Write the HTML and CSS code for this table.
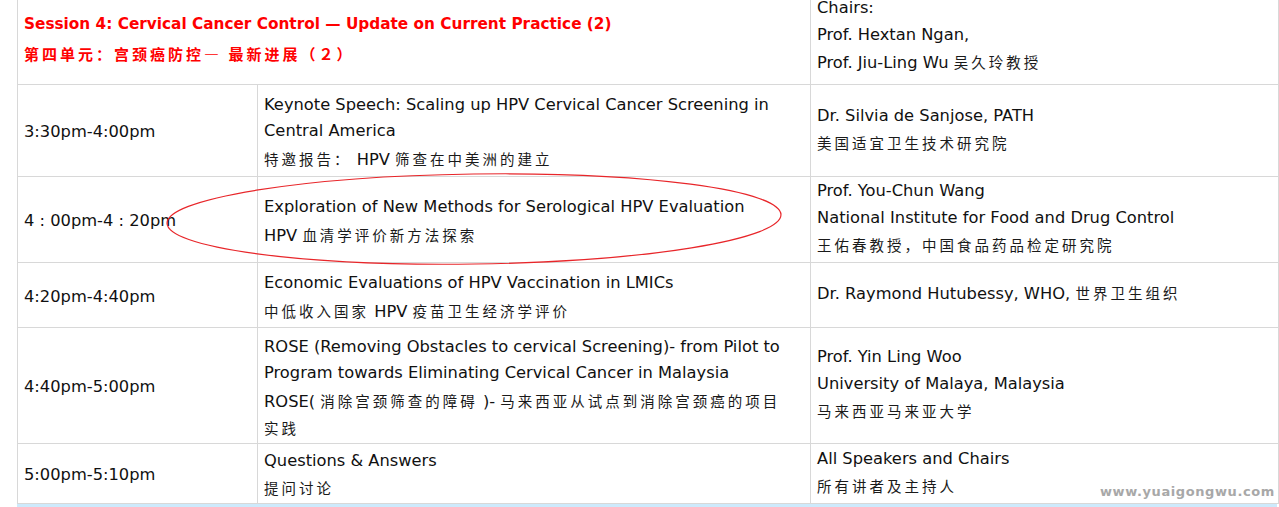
FILE: index.html
```html
<!DOCTYPE html>
<html lang="zh-CN">
<head>
<meta charset="utf-8">
<title>Session 4</title>
<link rel="stylesheet" href="styles.css">
</head>
<body>
<div class="page">
  <table class="agenda">
    <colgroup>
      <col class="c-time">
      <col class="c-topic">
      <col class="c-speaker">
    </colgroup>
    <tr class="r-head">
      <td colspan="2" class="session">
        <p class="session-en">Session 4: Cervical Cancer Control — Update on Current Practice (2)</p>
        <p class="session-zh">第四单元：宫颈癌防控— 最新进展（２）</p>
      </td>
      <td class="spk">
        <p>Chairs:</p>
        <p>Prof. Hextan Ngan,</p>
        <p>Prof. Jiu-Ling Wu <span class="zh">吴久玲教授</span></p>
      </td>
    </tr>
    <tr class="r2">
      <td class="time">3:30pm-4:00pm</td>
      <td class="topic">
        <p class="en">Keynote Speech: Scaling up HPV Cervical Cancer Screening in Central America</p>
        <p class="zhp"><span class="zh">特邀报告：</span> HPV <span class="zh">筛查在中美洲的建立</span></p>
      </td>
      <td class="spk">
        <p>Dr. Silvia de Sanjose, PATH</p>
        <p class="zh">美国适宜卫生技术研究院</p>
      </td>
    </tr>
    <tr class="r3">
      <td class="time">4 : 00pm-4 : 20pm</td>
      <td class="topic">
        <p class="en">Exploration of New Methods for Serological HPV Evaluation</p>
        <p class="zhp">HPV <span class="zh">血清学评价新方法探索</span></p>
      </td>
      <td class="spk">
        <p>Prof. You-Chun Wang</p>
        <p>National Institute for Food and Drug Control</p>
        <p class="zh">王佑春教授，中国食品药品检定研究院</p>
      </td>
    </tr>
    <tr class="r4">
      <td class="time">4:20pm-4:40pm</td>
      <td class="topic">
        <p class="en">Economic Evaluations of HPV Vaccination in LMICs</p>
        <p class="zhp"><span class="zh">中低收入国家</span> HPV <span class="zh">疫苗卫生经济学评价</span></p>
      </td>
      <td class="spk">
        <p>Dr. Raymond Hutubessy, WHO, <span class="zh">世界卫生组织</span></p>
      </td>
    </tr>
    <tr class="r5">
      <td class="time">4:40pm-5:00pm</td>
      <td class="topic">
        <p class="en">ROSE (Removing Obstacles to cervical Screening)- from Pilot to Program towards Eliminating Cervical Cancer in Malaysia</p>
        <p class="zhp">ROSE( <span class="zh">消除宫颈筛查的障碍</span> )- <span class="zh">马来西亚从试点到消除宫颈癌的项目实践</span></p>
      </td>
      <td class="spk">
        <p>Prof. Yin Ling Woo</p>
        <p>University of Malaya, Malaysia</p>
        <p class="zh">马来西亚马来亚大学</p>
      </td>
    </tr>
    <tr class="r6">
      <td class="time">5:00pm-5:10pm</td>
      <td class="topic">
        <p class="en">Questions &amp; Answers</p>
        <p class="zhp zh">提问讨论</p>
      </td>
      <td class="spk">
        <p>All Speakers and Chairs</p>
        <p class="zh">所有讲者及主持人</p>
      </td>
    </tr>
  </table>
  <div class="next-row"></div>
  <svg class="mark" width="640" height="110" viewBox="160 165 640 110" aria-hidden="true">
    <ellipse cx="474" cy="219" rx="307" ry="45" fill="none" stroke="#e8262a" stroke-width="1.2" transform="rotate(-0.8 474 219)"/>
  </svg>
  <div class="watermark">www.yuaigongwu.com</div>
</div>
</body>
</html>
```
FILE: styles.css
```css
html, body {
  margin: 0;
  padding: 0;
  background: #ffffff;
}
body {
  font-family: "DejaVu Sans", "Noto Sans CJK SC", sans-serif;
  font-size: 16.3px;
  color: #111;
  overflow: hidden;
}
.page {
  position: relative;
  width: 1279px;
  height: 507px;
  padding-left: 17px;
  box-sizing: border-box;
  overflow: hidden;
}
p { margin: 0; }
.agenda {
  border-collapse: collapse;
  table-layout: fixed;
  width: 1261px;
  margin-top: -6px;
}
.c-time { width: 240px; }
.c-topic { width: 553px; }
.c-speaker { width: 468px; }
.agenda td {
  box-sizing: border-box;
  border: 1px solid #d8d8d8;
  vertical-align: middle;
  padding: 0 4px 0 6px;
  line-height: 26px;
  overflow: hidden;
}
.agenda td.time { padding-top: 3px; }
.agenda td.topic { padding: 4px 18px 0 6px; }
.agenda td.spk { padding-bottom: 4px; }
.r-head td { border-top: none; height: 90px; }
.r-head td.spk { padding-bottom: 8px; }
.r2 td { height: 92px; }
.r3 td { height: 86px; }
.r4 td { height: 65px; }
.r5 td { height: 116px; }
.r6 td { height: 60px; }
.agenda .r6 td.topic { padding-top: 0; }
.r6 .zhp { margin-top: 0; line-height: 24px; }
.session-en {
  color: #ff0000;
  font-weight: bold;
  font-size: 15.3px;
  line-height: 30px;
}
.session-zh {
  color: #ff0000;
  font-family: "Noto Sans CJK SC", sans-serif;
  font-weight: bold;
  font-size: 15px;
  letter-spacing: 3px;
  line-height: 30px;
}
.spk p { line-height: 27px; }
.topic .zhp { margin-top: 2px; }
.zh {
  font-family: "Noto Sans CJK SC", sans-serif;
  font-size: 14.5px;
  letter-spacing: 3px;
  color: #1a1a1a;
}
.next-row {
  width: 1260px;
  height: 6px;
  background: #cdeafc;
}
.mark {
  position: absolute;
  left: 160px;
  top: 165px;
  overflow: visible;
}
.watermark {
  position: absolute;
  right: 4px;
  top: 484px;
  font-family: "DejaVu Sans", sans-serif;
  font-weight: bold;
  font-size: 13px;
  letter-spacing: 0.6px;
  color: #a8a8a8;
}
```
